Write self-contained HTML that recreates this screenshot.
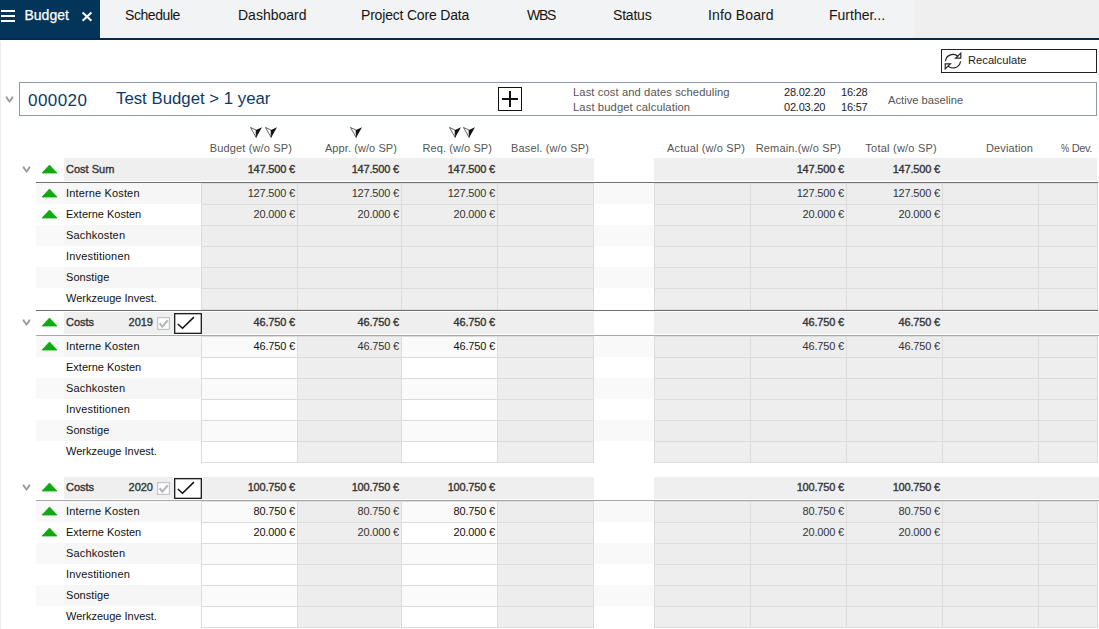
<!DOCTYPE html>
<html><head><meta charset="utf-8"><style>
html,body{margin:0;padding:0;background:#fff;width:1099px;height:629px;overflow:hidden;position:relative}
body{font-family:"Liberation Sans", sans-serif}
body>div,body>svg{position:absolute}
.t{white-space:nowrap;line-height:1;}
</style></head><body>
<div style="left:0px;top:0px;width:1099px;height:38px;background:#efefef"></div>
<div style="left:100px;top:0px;width:814px;height:38px;background:#f2f3f5"></div>
<div style="left:0px;top:0px;width:100px;height:38px;background:#033459"></div>
<div style="left:0px;top:38px;width:1099px;height:2px;background:#022a4c"></div>
<div style="left:1px;top:10px;width:14.3px;height:1.7px;background:#fff"></div>
<div style="left:1px;top:15px;width:14.3px;height:1.7px;background:#fff"></div>
<div style="left:1px;top:20px;width:14.3px;height:1.7px;background:#fff"></div>
<div class="t" style="left:24.5px;top:8px;font-size:14px;color:#fff;-webkit-text-stroke:0.25px #fff;">Budget</div>
<svg style="position:absolute;left:81px;top:11px" width="12" height="12" viewBox="0 0 12 12"><path d="M1.6 1.5 L10.4 9.7 M10.4 1.5 L1.6 9.7" stroke="#fff" stroke-width="2.1"/></svg>
<div class="t" style="left:125px;top:8px;font-size:14px;color:#151515;letter-spacing:-0.43px">Schedule</div>
<div class="t" style="left:238px;top:8px;font-size:14px;color:#151515;letter-spacing:0px">Dashboard</div>
<div class="t" style="left:361px;top:8px;font-size:14px;color:#151515;letter-spacing:-0.19px">Project Core Data</div>
<div class="t" style="left:527px;top:8px;font-size:14px;color:#151515;letter-spacing:-1.3px">WBS</div>
<div class="t" style="left:613px;top:8px;font-size:14px;color:#151515;letter-spacing:-0.2px">Status</div>
<div class="t" style="left:708px;top:8px;font-size:14px;color:#151515;letter-spacing:0.11px">Info Board</div>
<div class="t" style="left:829px;top:8px;font-size:14px;color:#151515;letter-spacing:0px">Further...</div>
<div style="left:0px;top:41px;width:1px;height:588px;background:#ececec"></div>
<div style="left:941px;top:49px;width:156px;height:24px;border:1px solid #222;box-sizing:border-box;background:#fff"></div>
<svg style="position:absolute;left:943px;top:51px" width="20" height="20" viewBox="0 0 20 20" fill="none" stroke="#222" stroke-width="1.15"><path d="M2.5 10.2 A7.5 7.5 0 0 1 15.2 5.6"/><path d="M17.5 10.2 A7.5 7.5 0 0 1 4.8 14.8"/><path d="M12.6 7.1 H17.8 V2.2 Z" stroke-linejoin="miter"/><path d="M7.4 12.8 H2.2 V17.8 Z" stroke-linejoin="miter"/></svg>
<div class="t" style="left:968px;top:55px;font-size:11.2px;color:#222;">Recalculate</div>
<div style="left:19px;top:82px;width:1078px;height:34px;border:1px solid #8d99a6;box-sizing:border-box;background:#fff"></div>
<svg style="position:absolute;left:5px;top:96px" width="9" height="8" viewBox="0 0 9 8"><path d="M1.6 0.6 L1.6 1.6 L4.5 5.5 L7.4 1.6 L7.4 0.6" stroke="#999" stroke-width="1.8" fill="none"/></svg>
<div class="t" style="left:28px;top:92px;font-size:17px;color:#0d3a64;letter-spacing:0.45px">000020</div>
<div class="t" style="left:116px;top:91px;font-size:16.8px;color:#0d3a64;">Test Budget &gt; 1 year</div>
<div style="left:498px;top:87px;width:24px;height:24px;border:1.5px solid #111;box-sizing:border-box"></div>
<div style="left:502px;top:98px;width:16px;height:1.6px;background:#111"></div>
<div style="left:509.2px;top:91px;width:1.6px;height:16px;background:#111"></div>
<div class="t" style="left:573px;top:87px;font-size:11.2px;color:#555;letter-spacing:0.1px">Last cost and dates scheduling</div>
<div class="t" style="left:573px;top:102px;font-size:11.2px;color:#555;letter-spacing:0.12px">Last budget calculation</div>
<div class="t" style="left:784px;top:87px;font-size:11px;color:#222;letter-spacing:-0.2px">28.02.20</div>
<div class="t" style="left:841px;top:87px;font-size:11px;color:#222;letter-spacing:-0.2px">16:28</div>
<div class="t" style="left:784px;top:102px;font-size:11px;color:#222;letter-spacing:-0.2px">02.03.20</div>
<div class="t" style="left:841px;top:102px;font-size:11px;color:#222;letter-spacing:-0.2px">16:57</div>
<div class="t" style="left:888px;top:95px;font-size:11.2px;color:#555;">Active baseline</div>
<div class="t" style="right:807px;top:143px;font-size:11px;color:#555;text-align:right;letter-spacing:0.14px">Budget (w/o SP)</div>
<div class="t" style="right:702px;top:143px;font-size:11px;color:#555;text-align:right;letter-spacing:0.08px">Appr. (w/o SP)</div>
<div class="t" style="right:607px;top:143px;font-size:11px;color:#555;text-align:right;letter-spacing:0.08px">Req. (w/o SP)</div>
<div class="t" style="right:510px;top:143px;font-size:11px;color:#555;text-align:right;letter-spacing:0.14px">Basel. (w/o SP)</div>
<div class="t" style="right:354px;top:143px;font-size:11px;color:#555;text-align:right;letter-spacing:0.14px">Actual (w/o SP)</div>
<div class="t" style="right:258px;top:143px;font-size:11px;color:#555;text-align:right;letter-spacing:0.14px">Remain.(w/o SP)</div>
<div class="t" style="right:162px;top:143px;font-size:11px;color:#555;text-align:right;letter-spacing:0.23px">Total (w/o SP)</div>
<div class="t" style="right:66px;top:143px;font-size:11px;color:#555;text-align:right;letter-spacing:0.12px">Deviation</div>
<div class="t" style="right:7px;top:143px;font-size:11px;color:#555;text-align:right;letter-spacing:-0.4px">Dev.</div>
<div class="t" style="left:1060.5px;top:144px;font-size:10.4px;color:#555;transform:scaleX(0.88);transform-origin:0 0">%</div>
<svg style="position:absolute;left:250px;top:127px" width="13" height="11" viewBox="0 0 13 11"><path d="M0.5 0.5 L6 3 L6.2 10.5 Z" fill="#fff" stroke="#222" stroke-width="0.7" stroke-linejoin="round"/><path d="M6 3 L12 0.3 L6.2 10.5 Z" fill="#111"/></svg>
<svg style="position:absolute;left:264.5px;top:127px" width="13" height="11" viewBox="0 0 13 11"><path d="M0.5 0.5 L6 3 L6.2 10.5 Z" fill="#fff" stroke="#222" stroke-width="0.7" stroke-linejoin="round"/><path d="M6 3 L12 0.3 L6.2 10.5 Z" fill="#111"/></svg>
<svg style="position:absolute;left:350px;top:127px" width="13" height="11" viewBox="0 0 13 11"><path d="M0.5 0.5 L6 3 L6.2 10.5 Z" fill="#fff" stroke="#222" stroke-width="0.7" stroke-linejoin="round"/><path d="M6 3 L12 0.3 L6.2 10.5 Z" fill="#111"/></svg>
<svg style="position:absolute;left:449px;top:127px" width="13" height="11" viewBox="0 0 13 11"><path d="M0.5 0.5 L6 3 L6.2 10.5 Z" fill="#fff" stroke="#222" stroke-width="0.7" stroke-linejoin="round"/><path d="M6 3 L12 0.3 L6.2 10.5 Z" fill="#111"/></svg>
<svg style="position:absolute;left:463px;top:127px" width="13" height="11" viewBox="0 0 13 11"><path d="M0.5 0.5 L6 3 L6.2 10.5 Z" fill="#fff" stroke="#222" stroke-width="0.7" stroke-linejoin="round"/><path d="M6 3 L12 0.3 L6.2 10.5 Z" fill="#111"/></svg>
<div style="left:64px;top:158px;width:530px;height:23px;background:#efefef"></div>
<div style="left:654px;top:158px;width:443px;height:23px;background:#efefef"></div>
<svg style="position:absolute;left:22px;top:165.5px" width="9" height="8" viewBox="0 0 9 8"><path d="M1.6 0.6 L1.6 1.6 L4.5 5.5 L7.4 1.6 L7.4 0.6" stroke="#999" stroke-width="1.8" fill="none" stroke-linejoin="miter"/></svg>
<svg style="position:absolute;left:41px;top:164.4px" width="17" height="10" viewBox="0 0 17 10"><path d="M1 9 L8.5 1 L16 9 Z" fill="#10aa10" stroke="#10aa10" stroke-width="0.8" stroke-linejoin="round"/></svg>
<div class="t" style="left:66px;top:164px;font-size:11px;color:#333;-webkit-text-stroke:0.35px #333;">Cost Sum</div>
<div class="t" style="right:804px;top:164px;font-size:11px;color:#333;-webkit-text-stroke:0.35px #333;text-align:right;letter-spacing:-0.18px">147.500 €</div>
<div class="t" style="right:700px;top:164px;font-size:11px;color:#333;-webkit-text-stroke:0.35px #333;text-align:right;letter-spacing:-0.18px">147.500 €</div>
<div class="t" style="right:604px;top:164px;font-size:11px;color:#333;-webkit-text-stroke:0.35px #333;text-align:right;letter-spacing:-0.18px">147.500 €</div>
<div class="t" style="right:255px;top:164px;font-size:11px;color:#333;-webkit-text-stroke:0.35px #333;text-align:right;letter-spacing:-0.18px">147.500 €</div>
<div class="t" style="right:159px;top:164px;font-size:11px;color:#333;-webkit-text-stroke:0.35px #333;text-align:right;letter-spacing:-0.18px">147.500 €</div>
<div style="left:36px;top:182px;width:1062px;height:1px;background:#707070"></div>
<div style="left:36px;top:183px;width:28px;height:21px;background:#f9f9f9"></div>
<div style="left:64px;top:183px;width:137px;height:21px;background:#f6f6f6"></div>
<div style="left:594px;top:183px;width:60px;height:21px;background:#f9f9f9"></div>
<div style="left:201px;top:183px;width:97px;height:22px;background:#ededed;border:1px solid #dcdcdc;box-sizing:border-box"></div>
<div style="left:297px;top:183px;width:105px;height:22px;background:#ededed;border:1px solid #dcdcdc;box-sizing:border-box"></div>
<div style="left:401px;top:183px;width:97px;height:22px;background:#ededed;border:1px solid #dcdcdc;box-sizing:border-box"></div>
<div style="left:497px;top:183px;width:97px;height:22px;background:#ededed;border:1px solid #dcdcdc;box-sizing:border-box"></div>
<div style="left:654px;top:183px;width:97px;height:22px;background:#ededed;border:1px solid #dcdcdc;box-sizing:border-box"></div>
<div style="left:750px;top:183px;width:97px;height:22px;background:#ededed;border:1px solid #dcdcdc;box-sizing:border-box"></div>
<div style="left:846px;top:183px;width:97px;height:22px;background:#ededed;border:1px solid #dcdcdc;box-sizing:border-box"></div>
<div style="left:942px;top:183px;width:97px;height:22px;background:#ededed;border:1px solid #dcdcdc;box-sizing:border-box"></div>
<div style="left:1038px;top:183px;width:60px;height:22px;background:#ededed;border:1px solid #dcdcdc;box-sizing:border-box"></div>
<svg style="position:absolute;left:41px;top:187.6px" width="17" height="10" viewBox="0 0 17 10"><path d="M1 9 L8.5 1 L16 9 Z" fill="#10aa10" stroke="#10aa10" stroke-width="0.8" stroke-linejoin="round"/></svg>
<div class="t" style="left:66px;top:188px;font-size:11px;color:#111;letter-spacing:0.15px">Interne Kosten</div>
<div class="t" style="right:804px;top:188px;font-size:11px;color:#333;text-align:right;letter-spacing:-0.18px">127.500 €</div>
<div class="t" style="right:700px;top:188px;font-size:11px;color:#333;text-align:right;letter-spacing:-0.18px">127.500 €</div>
<div class="t" style="right:604px;top:188px;font-size:11px;color:#333;text-align:right;letter-spacing:-0.18px">127.500 €</div>
<div class="t" style="right:255px;top:188px;font-size:11px;color:#333;text-align:right;letter-spacing:-0.18px">127.500 €</div>
<div class="t" style="right:159px;top:188px;font-size:11px;color:#333;text-align:right;letter-spacing:-0.18px">127.500 €</div>
<div style="left:36px;top:204px;width:28px;height:21px;background:#fff"></div>
<div style="left:64px;top:204px;width:137px;height:21px;background:#fff"></div>
<div style="left:594px;top:204px;width:60px;height:21px;background:#fff"></div>
<div style="left:201px;top:204px;width:97px;height:22px;background:#eeeeee;border:1px solid #dcdcdc;box-sizing:border-box"></div>
<div style="left:297px;top:204px;width:105px;height:22px;background:#eeeeee;border:1px solid #dcdcdc;box-sizing:border-box"></div>
<div style="left:401px;top:204px;width:97px;height:22px;background:#eeeeee;border:1px solid #dcdcdc;box-sizing:border-box"></div>
<div style="left:497px;top:204px;width:97px;height:22px;background:#eeeeee;border:1px solid #dcdcdc;box-sizing:border-box"></div>
<div style="left:654px;top:204px;width:97px;height:22px;background:#eeeeee;border:1px solid #dcdcdc;box-sizing:border-box"></div>
<div style="left:750px;top:204px;width:97px;height:22px;background:#eeeeee;border:1px solid #dcdcdc;box-sizing:border-box"></div>
<div style="left:846px;top:204px;width:97px;height:22px;background:#eeeeee;border:1px solid #dcdcdc;box-sizing:border-box"></div>
<div style="left:942px;top:204px;width:97px;height:22px;background:#eeeeee;border:1px solid #dcdcdc;box-sizing:border-box"></div>
<div style="left:1038px;top:204px;width:60px;height:22px;background:#eeeeee;border:1px solid #dcdcdc;box-sizing:border-box"></div>
<svg style="position:absolute;left:41px;top:208.6px" width="17" height="10" viewBox="0 0 17 10"><path d="M1 9 L8.5 1 L16 9 Z" fill="#10aa10" stroke="#10aa10" stroke-width="0.8" stroke-linejoin="round"/></svg>
<div class="t" style="left:66px;top:209px;font-size:11px;color:#111;letter-spacing:0px">Externe Kosten</div>
<div class="t" style="right:804px;top:209px;font-size:11px;color:#333;text-align:right;letter-spacing:-0.18px">20.000 €</div>
<div class="t" style="right:700px;top:209px;font-size:11px;color:#333;text-align:right;letter-spacing:-0.18px">20.000 €</div>
<div class="t" style="right:604px;top:209px;font-size:11px;color:#333;text-align:right;letter-spacing:-0.18px">20.000 €</div>
<div class="t" style="right:255px;top:209px;font-size:11px;color:#333;text-align:right;letter-spacing:-0.18px">20.000 €</div>
<div class="t" style="right:159px;top:209px;font-size:11px;color:#333;text-align:right;letter-spacing:-0.18px">20.000 €</div>
<div style="left:36px;top:225px;width:28px;height:21px;background:#f9f9f9"></div>
<div style="left:64px;top:225px;width:137px;height:21px;background:#f6f6f6"></div>
<div style="left:594px;top:225px;width:60px;height:21px;background:#f9f9f9"></div>
<div style="left:201px;top:225px;width:97px;height:22px;background:#ededed;border:1px solid #dcdcdc;box-sizing:border-box"></div>
<div style="left:297px;top:225px;width:105px;height:22px;background:#ededed;border:1px solid #dcdcdc;box-sizing:border-box"></div>
<div style="left:401px;top:225px;width:97px;height:22px;background:#ededed;border:1px solid #dcdcdc;box-sizing:border-box"></div>
<div style="left:497px;top:225px;width:97px;height:22px;background:#ededed;border:1px solid #dcdcdc;box-sizing:border-box"></div>
<div style="left:654px;top:225px;width:97px;height:22px;background:#ededed;border:1px solid #dcdcdc;box-sizing:border-box"></div>
<div style="left:750px;top:225px;width:97px;height:22px;background:#ededed;border:1px solid #dcdcdc;box-sizing:border-box"></div>
<div style="left:846px;top:225px;width:97px;height:22px;background:#ededed;border:1px solid #dcdcdc;box-sizing:border-box"></div>
<div style="left:942px;top:225px;width:97px;height:22px;background:#ededed;border:1px solid #dcdcdc;box-sizing:border-box"></div>
<div style="left:1038px;top:225px;width:60px;height:22px;background:#ededed;border:1px solid #dcdcdc;box-sizing:border-box"></div>
<div class="t" style="left:66px;top:230px;font-size:11px;color:#111;letter-spacing:0.17px">Sachkosten</div>
<div style="left:36px;top:246px;width:28px;height:21px;background:#fff"></div>
<div style="left:64px;top:246px;width:137px;height:21px;background:#fff"></div>
<div style="left:594px;top:246px;width:60px;height:21px;background:#fff"></div>
<div style="left:201px;top:246px;width:97px;height:22px;background:#eeeeee;border:1px solid #dcdcdc;box-sizing:border-box"></div>
<div style="left:297px;top:246px;width:105px;height:22px;background:#eeeeee;border:1px solid #dcdcdc;box-sizing:border-box"></div>
<div style="left:401px;top:246px;width:97px;height:22px;background:#eeeeee;border:1px solid #dcdcdc;box-sizing:border-box"></div>
<div style="left:497px;top:246px;width:97px;height:22px;background:#eeeeee;border:1px solid #dcdcdc;box-sizing:border-box"></div>
<div style="left:654px;top:246px;width:97px;height:22px;background:#eeeeee;border:1px solid #dcdcdc;box-sizing:border-box"></div>
<div style="left:750px;top:246px;width:97px;height:22px;background:#eeeeee;border:1px solid #dcdcdc;box-sizing:border-box"></div>
<div style="left:846px;top:246px;width:97px;height:22px;background:#eeeeee;border:1px solid #dcdcdc;box-sizing:border-box"></div>
<div style="left:942px;top:246px;width:97px;height:22px;background:#eeeeee;border:1px solid #dcdcdc;box-sizing:border-box"></div>
<div style="left:1038px;top:246px;width:60px;height:22px;background:#eeeeee;border:1px solid #dcdcdc;box-sizing:border-box"></div>
<div class="t" style="left:66px;top:251px;font-size:11px;color:#111;letter-spacing:0.17px">Investitionen</div>
<div style="left:36px;top:267px;width:28px;height:21px;background:#f9f9f9"></div>
<div style="left:64px;top:267px;width:137px;height:21px;background:#f6f6f6"></div>
<div style="left:594px;top:267px;width:60px;height:21px;background:#f9f9f9"></div>
<div style="left:201px;top:267px;width:97px;height:22px;background:#ededed;border:1px solid #dcdcdc;box-sizing:border-box"></div>
<div style="left:297px;top:267px;width:105px;height:22px;background:#ededed;border:1px solid #dcdcdc;box-sizing:border-box"></div>
<div style="left:401px;top:267px;width:97px;height:22px;background:#ededed;border:1px solid #dcdcdc;box-sizing:border-box"></div>
<div style="left:497px;top:267px;width:97px;height:22px;background:#ededed;border:1px solid #dcdcdc;box-sizing:border-box"></div>
<div style="left:654px;top:267px;width:97px;height:22px;background:#ededed;border:1px solid #dcdcdc;box-sizing:border-box"></div>
<div style="left:750px;top:267px;width:97px;height:22px;background:#ededed;border:1px solid #dcdcdc;box-sizing:border-box"></div>
<div style="left:846px;top:267px;width:97px;height:22px;background:#ededed;border:1px solid #dcdcdc;box-sizing:border-box"></div>
<div style="left:942px;top:267px;width:97px;height:22px;background:#ededed;border:1px solid #dcdcdc;box-sizing:border-box"></div>
<div style="left:1038px;top:267px;width:60px;height:22px;background:#ededed;border:1px solid #dcdcdc;box-sizing:border-box"></div>
<div class="t" style="left:66px;top:272px;font-size:11px;color:#111;letter-spacing:0.07px">Sonstige</div>
<div style="left:36px;top:288px;width:28px;height:21px;background:#fff"></div>
<div style="left:64px;top:288px;width:137px;height:21px;background:#fff"></div>
<div style="left:594px;top:288px;width:60px;height:21px;background:#fff"></div>
<div style="left:201px;top:288px;width:97px;height:22px;background:#eeeeee;border:1px solid #dcdcdc;box-sizing:border-box"></div>
<div style="left:297px;top:288px;width:105px;height:22px;background:#eeeeee;border:1px solid #dcdcdc;box-sizing:border-box"></div>
<div style="left:401px;top:288px;width:97px;height:22px;background:#eeeeee;border:1px solid #dcdcdc;box-sizing:border-box"></div>
<div style="left:497px;top:288px;width:97px;height:22px;background:#eeeeee;border:1px solid #dcdcdc;box-sizing:border-box"></div>
<div style="left:654px;top:288px;width:97px;height:22px;background:#eeeeee;border:1px solid #dcdcdc;box-sizing:border-box"></div>
<div style="left:750px;top:288px;width:97px;height:22px;background:#eeeeee;border:1px solid #dcdcdc;box-sizing:border-box"></div>
<div style="left:846px;top:288px;width:97px;height:22px;background:#eeeeee;border:1px solid #dcdcdc;box-sizing:border-box"></div>
<div style="left:942px;top:288px;width:97px;height:22px;background:#eeeeee;border:1px solid #dcdcdc;box-sizing:border-box"></div>
<div style="left:1038px;top:288px;width:60px;height:22px;background:#eeeeee;border:1px solid #dcdcdc;box-sizing:border-box"></div>
<div class="t" style="left:66px;top:293px;font-size:11px;color:#111;letter-spacing:0px">Werkzeuge Invest.</div>
<div style="left:36px;top:310px;width:1062px;height:1px;background:#707070"></div>
<div style="left:64px;top:312px;width:530px;height:22px;background:#efefef"></div>
<div style="left:654px;top:312px;width:445px;height:22px;background:#efefef"></div>
<svg style="position:absolute;left:22px;top:318.5px" width="9" height="8" viewBox="0 0 9 8"><path d="M1.6 0.6 L1.6 1.6 L4.5 5.5 L7.4 1.6 L7.4 0.6" stroke="#999" stroke-width="1.8" fill="none" stroke-linejoin="miter"/></svg>
<svg style="position:absolute;left:41px;top:317.4px" width="17" height="10" viewBox="0 0 17 10"><path d="M1 9 L8.5 1 L16 9 Z" fill="#10aa10" stroke="#10aa10" stroke-width="0.8" stroke-linejoin="round"/></svg>
<div class="t" style="left:66px;top:317px;font-size:11px;color:#333;-webkit-text-stroke:0.35px #333;">Costs</div>
<div class="t" style="right:946px;top:317px;font-size:11px;color:#333;-webkit-text-stroke:0.35px #333;text-align:right;">2019</div>
<svg style="position:absolute;left:157px;top:317px" width="13" height="13" viewBox="0 0 13 13"><rect x="0.6" y="0.6" width="11.8" height="11.8" fill="#fff" stroke="#c4c4c4" stroke-width="1.2"/><path d="M2.6 6.2 L5.4 9.6 L10.8 3.2" stroke="#b3b9be" stroke-width="2.2" fill="none"/></svg>
<svg style="position:absolute;left:174px;top:313px" width="28" height="21" viewBox="0 0 28 21"><rect x="0.7" y="0.7" width="26.6" height="19.6" fill="#fff" stroke="#111" stroke-width="1.25"/><path d="M3.8 11 L8.5 15.3 L19.9 4.1" stroke="#111" stroke-width="1.5" fill="none"/></svg>
<div class="t" style="right:804px;top:317px;font-size:11px;color:#333;-webkit-text-stroke:0.35px #333;text-align:right;letter-spacing:-0.18px">46.750 €</div>
<div class="t" style="right:700px;top:317px;font-size:11px;color:#333;-webkit-text-stroke:0.35px #333;text-align:right;letter-spacing:-0.18px">46.750 €</div>
<div class="t" style="right:604px;top:317px;font-size:11px;color:#333;-webkit-text-stroke:0.35px #333;text-align:right;letter-spacing:-0.18px">46.750 €</div>
<div class="t" style="right:255px;top:317px;font-size:11px;color:#333;-webkit-text-stroke:0.35px #333;text-align:right;letter-spacing:-0.18px">46.750 €</div>
<div class="t" style="right:159px;top:317px;font-size:11px;color:#333;-webkit-text-stroke:0.35px #333;text-align:right;letter-spacing:-0.18px">46.750 €</div>
<div style="left:36px;top:335px;width:1063px;height:1px;background:#a8a8a8"></div>
<div style="left:36px;top:336px;width:28px;height:21px;background:#f9f9f9"></div>
<div style="left:64px;top:336px;width:137px;height:21px;background:#f6f6f6"></div>
<div style="left:594px;top:336px;width:60px;height:21px;background:#f9f9f9"></div>
<div style="left:201px;top:336px;width:97px;height:22px;background:#fafafa;border:1px solid #dcdcdc;box-sizing:border-box"></div>
<div style="left:297px;top:336px;width:105px;height:22px;background:#ededed;border:1px solid #dcdcdc;box-sizing:border-box"></div>
<div style="left:401px;top:336px;width:97px;height:22px;background:#fafafa;border:1px solid #dcdcdc;box-sizing:border-box"></div>
<div style="left:497px;top:336px;width:97px;height:22px;background:#ededed;border:1px solid #dcdcdc;box-sizing:border-box"></div>
<div style="left:654px;top:336px;width:97px;height:22px;background:#ededed;border:1px solid #dcdcdc;box-sizing:border-box"></div>
<div style="left:750px;top:336px;width:97px;height:22px;background:#ededed;border:1px solid #dcdcdc;box-sizing:border-box"></div>
<div style="left:846px;top:336px;width:97px;height:22px;background:#ededed;border:1px solid #dcdcdc;box-sizing:border-box"></div>
<div style="left:942px;top:336px;width:97px;height:22px;background:#ededed;border:1px solid #dcdcdc;box-sizing:border-box"></div>
<div style="left:1038px;top:336px;width:60px;height:22px;background:#ededed;border:1px solid #dcdcdc;box-sizing:border-box"></div>
<svg style="position:absolute;left:41px;top:340.6px" width="17" height="10" viewBox="0 0 17 10"><path d="M1 9 L8.5 1 L16 9 Z" fill="#10aa10" stroke="#10aa10" stroke-width="0.8" stroke-linejoin="round"/></svg>
<div class="t" style="left:66px;top:341px;font-size:11px;color:#111;letter-spacing:0.15px">Interne Kosten</div>
<div class="t" style="right:804px;top:341px;font-size:11px;color:#111;text-align:right;letter-spacing:-0.18px">46.750 €</div>
<div class="t" style="right:700px;top:341px;font-size:11px;color:#333;text-align:right;letter-spacing:-0.18px">46.750 €</div>
<div class="t" style="right:604px;top:341px;font-size:11px;color:#111;text-align:right;letter-spacing:-0.18px">46.750 €</div>
<div class="t" style="right:255px;top:341px;font-size:11px;color:#333;text-align:right;letter-spacing:-0.18px">46.750 €</div>
<div class="t" style="right:159px;top:341px;font-size:11px;color:#333;text-align:right;letter-spacing:-0.18px">46.750 €</div>
<div style="left:36px;top:357px;width:28px;height:21px;background:#fff"></div>
<div style="left:64px;top:357px;width:137px;height:21px;background:#fff"></div>
<div style="left:594px;top:357px;width:60px;height:21px;background:#fff"></div>
<div style="left:201px;top:357px;width:97px;height:22px;background:#fff;border:1px solid #dcdcdc;box-sizing:border-box"></div>
<div style="left:297px;top:357px;width:105px;height:22px;background:#eeeeee;border:1px solid #dcdcdc;box-sizing:border-box"></div>
<div style="left:401px;top:357px;width:97px;height:22px;background:#fff;border:1px solid #dcdcdc;box-sizing:border-box"></div>
<div style="left:497px;top:357px;width:97px;height:22px;background:#eeeeee;border:1px solid #dcdcdc;box-sizing:border-box"></div>
<div style="left:654px;top:357px;width:97px;height:22px;background:#eeeeee;border:1px solid #dcdcdc;box-sizing:border-box"></div>
<div style="left:750px;top:357px;width:97px;height:22px;background:#eeeeee;border:1px solid #dcdcdc;box-sizing:border-box"></div>
<div style="left:846px;top:357px;width:97px;height:22px;background:#eeeeee;border:1px solid #dcdcdc;box-sizing:border-box"></div>
<div style="left:942px;top:357px;width:97px;height:22px;background:#eeeeee;border:1px solid #dcdcdc;box-sizing:border-box"></div>
<div style="left:1038px;top:357px;width:60px;height:22px;background:#eeeeee;border:1px solid #dcdcdc;box-sizing:border-box"></div>
<div class="t" style="left:66px;top:362px;font-size:11px;color:#111;letter-spacing:0px">Externe Kosten</div>
<div style="left:36px;top:378px;width:28px;height:21px;background:#f9f9f9"></div>
<div style="left:64px;top:378px;width:137px;height:21px;background:#f6f6f6"></div>
<div style="left:594px;top:378px;width:60px;height:21px;background:#f9f9f9"></div>
<div style="left:201px;top:378px;width:97px;height:22px;background:#fafafa;border:1px solid #dcdcdc;box-sizing:border-box"></div>
<div style="left:297px;top:378px;width:105px;height:22px;background:#ededed;border:1px solid #dcdcdc;box-sizing:border-box"></div>
<div style="left:401px;top:378px;width:97px;height:22px;background:#fafafa;border:1px solid #dcdcdc;box-sizing:border-box"></div>
<div style="left:497px;top:378px;width:97px;height:22px;background:#ededed;border:1px solid #dcdcdc;box-sizing:border-box"></div>
<div style="left:654px;top:378px;width:97px;height:22px;background:#ededed;border:1px solid #dcdcdc;box-sizing:border-box"></div>
<div style="left:750px;top:378px;width:97px;height:22px;background:#ededed;border:1px solid #dcdcdc;box-sizing:border-box"></div>
<div style="left:846px;top:378px;width:97px;height:22px;background:#ededed;border:1px solid #dcdcdc;box-sizing:border-box"></div>
<div style="left:942px;top:378px;width:97px;height:22px;background:#ededed;border:1px solid #dcdcdc;box-sizing:border-box"></div>
<div style="left:1038px;top:378px;width:60px;height:22px;background:#ededed;border:1px solid #dcdcdc;box-sizing:border-box"></div>
<div class="t" style="left:66px;top:383px;font-size:11px;color:#111;letter-spacing:0.17px">Sachkosten</div>
<div style="left:36px;top:399px;width:28px;height:21px;background:#fff"></div>
<div style="left:64px;top:399px;width:137px;height:21px;background:#fff"></div>
<div style="left:594px;top:399px;width:60px;height:21px;background:#fff"></div>
<div style="left:201px;top:399px;width:97px;height:22px;background:#fff;border:1px solid #dcdcdc;box-sizing:border-box"></div>
<div style="left:297px;top:399px;width:105px;height:22px;background:#eeeeee;border:1px solid #dcdcdc;box-sizing:border-box"></div>
<div style="left:401px;top:399px;width:97px;height:22px;background:#fff;border:1px solid #dcdcdc;box-sizing:border-box"></div>
<div style="left:497px;top:399px;width:97px;height:22px;background:#eeeeee;border:1px solid #dcdcdc;box-sizing:border-box"></div>
<div style="left:654px;top:399px;width:97px;height:22px;background:#eeeeee;border:1px solid #dcdcdc;box-sizing:border-box"></div>
<div style="left:750px;top:399px;width:97px;height:22px;background:#eeeeee;border:1px solid #dcdcdc;box-sizing:border-box"></div>
<div style="left:846px;top:399px;width:97px;height:22px;background:#eeeeee;border:1px solid #dcdcdc;box-sizing:border-box"></div>
<div style="left:942px;top:399px;width:97px;height:22px;background:#eeeeee;border:1px solid #dcdcdc;box-sizing:border-box"></div>
<div style="left:1038px;top:399px;width:60px;height:22px;background:#eeeeee;border:1px solid #dcdcdc;box-sizing:border-box"></div>
<div class="t" style="left:66px;top:404px;font-size:11px;color:#111;letter-spacing:0.17px">Investitionen</div>
<div style="left:36px;top:420px;width:28px;height:21px;background:#f9f9f9"></div>
<div style="left:64px;top:420px;width:137px;height:21px;background:#f6f6f6"></div>
<div style="left:594px;top:420px;width:60px;height:21px;background:#f9f9f9"></div>
<div style="left:201px;top:420px;width:97px;height:22px;background:#fafafa;border:1px solid #dcdcdc;box-sizing:border-box"></div>
<div style="left:297px;top:420px;width:105px;height:22px;background:#ededed;border:1px solid #dcdcdc;box-sizing:border-box"></div>
<div style="left:401px;top:420px;width:97px;height:22px;background:#fafafa;border:1px solid #dcdcdc;box-sizing:border-box"></div>
<div style="left:497px;top:420px;width:97px;height:22px;background:#ededed;border:1px solid #dcdcdc;box-sizing:border-box"></div>
<div style="left:654px;top:420px;width:97px;height:22px;background:#ededed;border:1px solid #dcdcdc;box-sizing:border-box"></div>
<div style="left:750px;top:420px;width:97px;height:22px;background:#ededed;border:1px solid #dcdcdc;box-sizing:border-box"></div>
<div style="left:846px;top:420px;width:97px;height:22px;background:#ededed;border:1px solid #dcdcdc;box-sizing:border-box"></div>
<div style="left:942px;top:420px;width:97px;height:22px;background:#ededed;border:1px solid #dcdcdc;box-sizing:border-box"></div>
<div style="left:1038px;top:420px;width:60px;height:22px;background:#ededed;border:1px solid #dcdcdc;box-sizing:border-box"></div>
<div class="t" style="left:66px;top:425px;font-size:11px;color:#111;letter-spacing:0.07px">Sonstige</div>
<div style="left:36px;top:441px;width:28px;height:21px;background:#fff"></div>
<div style="left:64px;top:441px;width:137px;height:21px;background:#fff"></div>
<div style="left:594px;top:441px;width:60px;height:21px;background:#fff"></div>
<div style="left:201px;top:441px;width:97px;height:22px;background:#fff;border:1px solid #dcdcdc;box-sizing:border-box"></div>
<div style="left:297px;top:441px;width:105px;height:22px;background:#eeeeee;border:1px solid #dcdcdc;box-sizing:border-box"></div>
<div style="left:401px;top:441px;width:97px;height:22px;background:#fff;border:1px solid #dcdcdc;box-sizing:border-box"></div>
<div style="left:497px;top:441px;width:97px;height:22px;background:#eeeeee;border:1px solid #dcdcdc;box-sizing:border-box"></div>
<div style="left:654px;top:441px;width:97px;height:22px;background:#eeeeee;border:1px solid #dcdcdc;box-sizing:border-box"></div>
<div style="left:750px;top:441px;width:97px;height:22px;background:#eeeeee;border:1px solid #dcdcdc;box-sizing:border-box"></div>
<div style="left:846px;top:441px;width:97px;height:22px;background:#eeeeee;border:1px solid #dcdcdc;box-sizing:border-box"></div>
<div style="left:942px;top:441px;width:97px;height:22px;background:#eeeeee;border:1px solid #dcdcdc;box-sizing:border-box"></div>
<div style="left:1038px;top:441px;width:60px;height:22px;background:#eeeeee;border:1px solid #dcdcdc;box-sizing:border-box"></div>
<div class="t" style="left:66px;top:446px;font-size:11px;color:#111;letter-spacing:0px">Werkzeuge Invest.</div>
<div style="left:64px;top:477px;width:530px;height:22px;background:#efefef"></div>
<div style="left:654px;top:477px;width:445px;height:22px;background:#efefef"></div>
<svg style="position:absolute;left:22px;top:483.5px" width="9" height="8" viewBox="0 0 9 8"><path d="M1.6 0.6 L1.6 1.6 L4.5 5.5 L7.4 1.6 L7.4 0.6" stroke="#999" stroke-width="1.8" fill="none" stroke-linejoin="miter"/></svg>
<svg style="position:absolute;left:41px;top:482.4px" width="17" height="10" viewBox="0 0 17 10"><path d="M1 9 L8.5 1 L16 9 Z" fill="#10aa10" stroke="#10aa10" stroke-width="0.8" stroke-linejoin="round"/></svg>
<div class="t" style="left:66px;top:482px;font-size:11px;color:#333;-webkit-text-stroke:0.35px #333;">Costs</div>
<div class="t" style="right:946px;top:482px;font-size:11px;color:#333;-webkit-text-stroke:0.35px #333;text-align:right;">2020</div>
<svg style="position:absolute;left:157px;top:482px" width="13" height="13" viewBox="0 0 13 13"><rect x="0.6" y="0.6" width="11.8" height="11.8" fill="#fff" stroke="#c4c4c4" stroke-width="1.2"/><path d="M2.6 6.2 L5.4 9.6 L10.8 3.2" stroke="#b3b9be" stroke-width="2.2" fill="none"/></svg>
<svg style="position:absolute;left:174px;top:478px" width="28" height="21" viewBox="0 0 28 21"><rect x="0.7" y="0.7" width="26.6" height="19.6" fill="#fff" stroke="#111" stroke-width="1.25"/><path d="M3.8 11 L8.5 15.3 L19.9 4.1" stroke="#111" stroke-width="1.5" fill="none"/></svg>
<div class="t" style="right:804px;top:482px;font-size:11px;color:#333;-webkit-text-stroke:0.35px #333;text-align:right;letter-spacing:-0.18px">100.750 €</div>
<div class="t" style="right:700px;top:482px;font-size:11px;color:#333;-webkit-text-stroke:0.35px #333;text-align:right;letter-spacing:-0.18px">100.750 €</div>
<div class="t" style="right:604px;top:482px;font-size:11px;color:#333;-webkit-text-stroke:0.35px #333;text-align:right;letter-spacing:-0.18px">100.750 €</div>
<div class="t" style="right:255px;top:482px;font-size:11px;color:#333;-webkit-text-stroke:0.35px #333;text-align:right;letter-spacing:-0.18px">100.750 €</div>
<div class="t" style="right:159px;top:482px;font-size:11px;color:#333;-webkit-text-stroke:0.35px #333;text-align:right;letter-spacing:-0.18px">100.750 €</div>
<div style="left:36px;top:500px;width:1063px;height:1px;background:#a8a8a8"></div>
<div style="left:36px;top:501px;width:28px;height:21px;background:#f9f9f9"></div>
<div style="left:64px;top:501px;width:137px;height:21px;background:#f6f6f6"></div>
<div style="left:594px;top:501px;width:60px;height:21px;background:#f9f9f9"></div>
<div style="left:201px;top:501px;width:97px;height:22px;background:#fafafa;border:1px solid #dcdcdc;box-sizing:border-box"></div>
<div style="left:297px;top:501px;width:105px;height:22px;background:#ededed;border:1px solid #dcdcdc;box-sizing:border-box"></div>
<div style="left:401px;top:501px;width:97px;height:22px;background:#fafafa;border:1px solid #dcdcdc;box-sizing:border-box"></div>
<div style="left:497px;top:501px;width:97px;height:22px;background:#ededed;border:1px solid #dcdcdc;box-sizing:border-box"></div>
<div style="left:654px;top:501px;width:97px;height:22px;background:#ededed;border:1px solid #dcdcdc;box-sizing:border-box"></div>
<div style="left:750px;top:501px;width:97px;height:22px;background:#ededed;border:1px solid #dcdcdc;box-sizing:border-box"></div>
<div style="left:846px;top:501px;width:97px;height:22px;background:#ededed;border:1px solid #dcdcdc;box-sizing:border-box"></div>
<div style="left:942px;top:501px;width:97px;height:22px;background:#ededed;border:1px solid #dcdcdc;box-sizing:border-box"></div>
<div style="left:1038px;top:501px;width:60px;height:22px;background:#ededed;border:1px solid #dcdcdc;box-sizing:border-box"></div>
<svg style="position:absolute;left:41px;top:505.6px" width="17" height="10" viewBox="0 0 17 10"><path d="M1 9 L8.5 1 L16 9 Z" fill="#10aa10" stroke="#10aa10" stroke-width="0.8" stroke-linejoin="round"/></svg>
<div class="t" style="left:66px;top:506px;font-size:11px;color:#111;letter-spacing:0.15px">Interne Kosten</div>
<div class="t" style="right:804px;top:506px;font-size:11px;color:#111;text-align:right;letter-spacing:-0.18px">80.750 €</div>
<div class="t" style="right:700px;top:506px;font-size:11px;color:#333;text-align:right;letter-spacing:-0.18px">80.750 €</div>
<div class="t" style="right:604px;top:506px;font-size:11px;color:#111;text-align:right;letter-spacing:-0.18px">80.750 €</div>
<div class="t" style="right:255px;top:506px;font-size:11px;color:#333;text-align:right;letter-spacing:-0.18px">80.750 €</div>
<div class="t" style="right:159px;top:506px;font-size:11px;color:#333;text-align:right;letter-spacing:-0.18px">80.750 €</div>
<div style="left:36px;top:522px;width:28px;height:21px;background:#fff"></div>
<div style="left:64px;top:522px;width:137px;height:21px;background:#fff"></div>
<div style="left:594px;top:522px;width:60px;height:21px;background:#fff"></div>
<div style="left:201px;top:522px;width:97px;height:22px;background:#fff;border:1px solid #dcdcdc;box-sizing:border-box"></div>
<div style="left:297px;top:522px;width:105px;height:22px;background:#eeeeee;border:1px solid #dcdcdc;box-sizing:border-box"></div>
<div style="left:401px;top:522px;width:97px;height:22px;background:#fff;border:1px solid #dcdcdc;box-sizing:border-box"></div>
<div style="left:497px;top:522px;width:97px;height:22px;background:#eeeeee;border:1px solid #dcdcdc;box-sizing:border-box"></div>
<div style="left:654px;top:522px;width:97px;height:22px;background:#eeeeee;border:1px solid #dcdcdc;box-sizing:border-box"></div>
<div style="left:750px;top:522px;width:97px;height:22px;background:#eeeeee;border:1px solid #dcdcdc;box-sizing:border-box"></div>
<div style="left:846px;top:522px;width:97px;height:22px;background:#eeeeee;border:1px solid #dcdcdc;box-sizing:border-box"></div>
<div style="left:942px;top:522px;width:97px;height:22px;background:#eeeeee;border:1px solid #dcdcdc;box-sizing:border-box"></div>
<div style="left:1038px;top:522px;width:60px;height:22px;background:#eeeeee;border:1px solid #dcdcdc;box-sizing:border-box"></div>
<svg style="position:absolute;left:41px;top:526.6px" width="17" height="10" viewBox="0 0 17 10"><path d="M1 9 L8.5 1 L16 9 Z" fill="#10aa10" stroke="#10aa10" stroke-width="0.8" stroke-linejoin="round"/></svg>
<div class="t" style="left:66px;top:527px;font-size:11px;color:#111;letter-spacing:0px">Externe Kosten</div>
<div class="t" style="right:804px;top:527px;font-size:11px;color:#111;text-align:right;letter-spacing:-0.18px">20.000 €</div>
<div class="t" style="right:700px;top:527px;font-size:11px;color:#333;text-align:right;letter-spacing:-0.18px">20.000 €</div>
<div class="t" style="right:604px;top:527px;font-size:11px;color:#111;text-align:right;letter-spacing:-0.18px">20.000 €</div>
<div class="t" style="right:255px;top:527px;font-size:11px;color:#333;text-align:right;letter-spacing:-0.18px">20.000 €</div>
<div class="t" style="right:159px;top:527px;font-size:11px;color:#333;text-align:right;letter-spacing:-0.18px">20.000 €</div>
<div style="left:36px;top:543px;width:28px;height:21px;background:#f9f9f9"></div>
<div style="left:64px;top:543px;width:137px;height:21px;background:#f6f6f6"></div>
<div style="left:594px;top:543px;width:60px;height:21px;background:#f9f9f9"></div>
<div style="left:201px;top:543px;width:97px;height:22px;background:#fafafa;border:1px solid #dcdcdc;box-sizing:border-box"></div>
<div style="left:297px;top:543px;width:105px;height:22px;background:#ededed;border:1px solid #dcdcdc;box-sizing:border-box"></div>
<div style="left:401px;top:543px;width:97px;height:22px;background:#fafafa;border:1px solid #dcdcdc;box-sizing:border-box"></div>
<div style="left:497px;top:543px;width:97px;height:22px;background:#ededed;border:1px solid #dcdcdc;box-sizing:border-box"></div>
<div style="left:654px;top:543px;width:97px;height:22px;background:#ededed;border:1px solid #dcdcdc;box-sizing:border-box"></div>
<div style="left:750px;top:543px;width:97px;height:22px;background:#ededed;border:1px solid #dcdcdc;box-sizing:border-box"></div>
<div style="left:846px;top:543px;width:97px;height:22px;background:#ededed;border:1px solid #dcdcdc;box-sizing:border-box"></div>
<div style="left:942px;top:543px;width:97px;height:22px;background:#ededed;border:1px solid #dcdcdc;box-sizing:border-box"></div>
<div style="left:1038px;top:543px;width:60px;height:22px;background:#ededed;border:1px solid #dcdcdc;box-sizing:border-box"></div>
<div class="t" style="left:66px;top:548px;font-size:11px;color:#111;letter-spacing:0.17px">Sachkosten</div>
<div style="left:36px;top:564px;width:28px;height:21px;background:#fff"></div>
<div style="left:64px;top:564px;width:137px;height:21px;background:#fff"></div>
<div style="left:594px;top:564px;width:60px;height:21px;background:#fff"></div>
<div style="left:201px;top:564px;width:97px;height:22px;background:#fff;border:1px solid #dcdcdc;box-sizing:border-box"></div>
<div style="left:297px;top:564px;width:105px;height:22px;background:#eeeeee;border:1px solid #dcdcdc;box-sizing:border-box"></div>
<div style="left:401px;top:564px;width:97px;height:22px;background:#fff;border:1px solid #dcdcdc;box-sizing:border-box"></div>
<div style="left:497px;top:564px;width:97px;height:22px;background:#eeeeee;border:1px solid #dcdcdc;box-sizing:border-box"></div>
<div style="left:654px;top:564px;width:97px;height:22px;background:#eeeeee;border:1px solid #dcdcdc;box-sizing:border-box"></div>
<div style="left:750px;top:564px;width:97px;height:22px;background:#eeeeee;border:1px solid #dcdcdc;box-sizing:border-box"></div>
<div style="left:846px;top:564px;width:97px;height:22px;background:#eeeeee;border:1px solid #dcdcdc;box-sizing:border-box"></div>
<div style="left:942px;top:564px;width:97px;height:22px;background:#eeeeee;border:1px solid #dcdcdc;box-sizing:border-box"></div>
<div style="left:1038px;top:564px;width:60px;height:22px;background:#eeeeee;border:1px solid #dcdcdc;box-sizing:border-box"></div>
<div class="t" style="left:66px;top:569px;font-size:11px;color:#111;letter-spacing:0.17px">Investitionen</div>
<div style="left:36px;top:585px;width:28px;height:21px;background:#f9f9f9"></div>
<div style="left:64px;top:585px;width:137px;height:21px;background:#f6f6f6"></div>
<div style="left:594px;top:585px;width:60px;height:21px;background:#f9f9f9"></div>
<div style="left:201px;top:585px;width:97px;height:22px;background:#fafafa;border:1px solid #dcdcdc;box-sizing:border-box"></div>
<div style="left:297px;top:585px;width:105px;height:22px;background:#ededed;border:1px solid #dcdcdc;box-sizing:border-box"></div>
<div style="left:401px;top:585px;width:97px;height:22px;background:#fafafa;border:1px solid #dcdcdc;box-sizing:border-box"></div>
<div style="left:497px;top:585px;width:97px;height:22px;background:#ededed;border:1px solid #dcdcdc;box-sizing:border-box"></div>
<div style="left:654px;top:585px;width:97px;height:22px;background:#ededed;border:1px solid #dcdcdc;box-sizing:border-box"></div>
<div style="left:750px;top:585px;width:97px;height:22px;background:#ededed;border:1px solid #dcdcdc;box-sizing:border-box"></div>
<div style="left:846px;top:585px;width:97px;height:22px;background:#ededed;border:1px solid #dcdcdc;box-sizing:border-box"></div>
<div style="left:942px;top:585px;width:97px;height:22px;background:#ededed;border:1px solid #dcdcdc;box-sizing:border-box"></div>
<div style="left:1038px;top:585px;width:60px;height:22px;background:#ededed;border:1px solid #dcdcdc;box-sizing:border-box"></div>
<div class="t" style="left:66px;top:590px;font-size:11px;color:#111;letter-spacing:0.07px">Sonstige</div>
<div style="left:36px;top:606px;width:28px;height:21px;background:#fff"></div>
<div style="left:64px;top:606px;width:137px;height:21px;background:#fff"></div>
<div style="left:594px;top:606px;width:60px;height:21px;background:#fff"></div>
<div style="left:201px;top:606px;width:97px;height:22px;background:#fff;border:1px solid #dcdcdc;box-sizing:border-box"></div>
<div style="left:297px;top:606px;width:105px;height:22px;background:#eeeeee;border:1px solid #dcdcdc;box-sizing:border-box"></div>
<div style="left:401px;top:606px;width:97px;height:22px;background:#fff;border:1px solid #dcdcdc;box-sizing:border-box"></div>
<div style="left:497px;top:606px;width:97px;height:22px;background:#eeeeee;border:1px solid #dcdcdc;box-sizing:border-box"></div>
<div style="left:654px;top:606px;width:97px;height:22px;background:#eeeeee;border:1px solid #dcdcdc;box-sizing:border-box"></div>
<div style="left:750px;top:606px;width:97px;height:22px;background:#eeeeee;border:1px solid #dcdcdc;box-sizing:border-box"></div>
<div style="left:846px;top:606px;width:97px;height:22px;background:#eeeeee;border:1px solid #dcdcdc;box-sizing:border-box"></div>
<div style="left:942px;top:606px;width:97px;height:22px;background:#eeeeee;border:1px solid #dcdcdc;box-sizing:border-box"></div>
<div style="left:1038px;top:606px;width:60px;height:22px;background:#eeeeee;border:1px solid #dcdcdc;box-sizing:border-box"></div>
<div class="t" style="left:66px;top:611px;font-size:11px;color:#111;letter-spacing:0px">Werkzeuge Invest.</div>
</body></html>
